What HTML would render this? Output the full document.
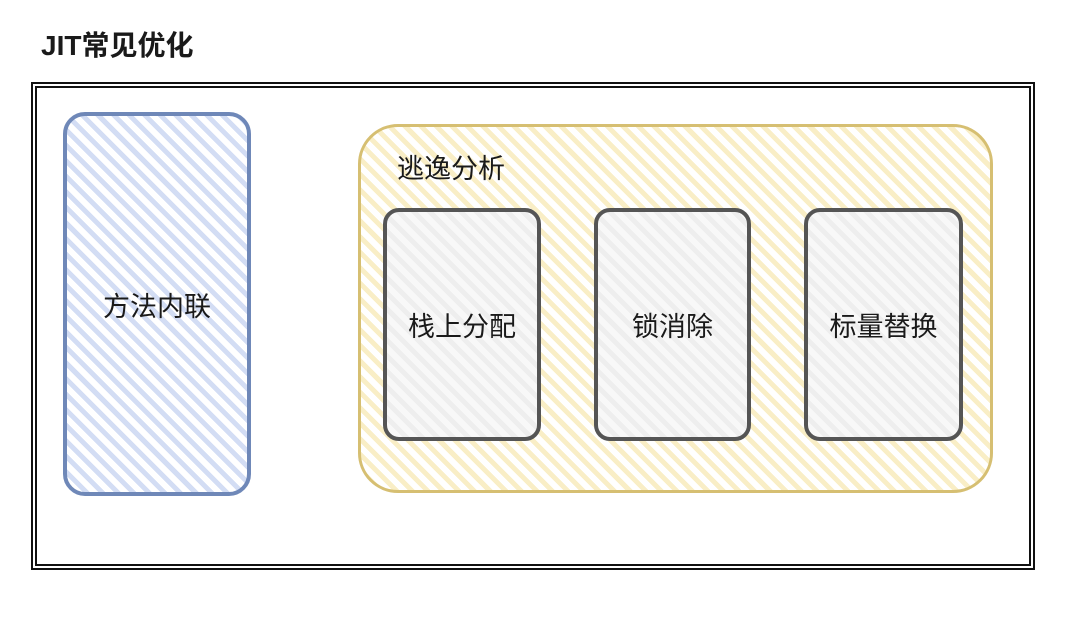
<!DOCTYPE html><html><head><meta charset="utf-8"><style>
body{margin:0;width:1080px;height:634px;background:#fff;position:relative;overflow:hidden;font-family:"Liberation Sans","Noto Sans CJK SC",sans-serif;color:#1a1a1a}
.a{position:absolute;box-sizing:border-box}
.t{display:flex;align-items:center;justify-content:center;font-size:27px}
</style></head><body>
<div class="a" style="left:41px;top:24px;font-size:28px;font-weight:bold;">JIT常见优化</div>
<div class="a" style="left:31px;top:82px;width:1004px;height:488px;border:2px solid #111"></div>
<div class="a" style="left:35px;top:86px;width:996px;height:480px;border:2px solid #111"></div>
<div class="a t" style="left:63px;top:112px;width:188px;height:384px;border:4px solid #6f88b8;border-radius:22px;background:repeating-linear-gradient(45deg,#d3ddf4 0 5px,#fff 5px 11px)">方法内联</div>
<div class="a" style="left:358px;top:124px;width:635px;height:369px;border:3px solid #d6bf72;border-radius:40px;background:repeating-linear-gradient(45deg,#f9eec6 0 5px,#fff 5px 11px)"></div>
<div class="a" style="left:397px;top:147px;font-size:27px">逃逸分析</div>
<div class="a t" style="left:383px;top:208px;width:158px;height:233px;border:4px solid #555;border-radius:16px;background:repeating-linear-gradient(45deg,#eeeeee 0 5px,#f8f8f8 5px 11px)">栈上分配</div>
<div class="a t" style="left:594px;top:208px;width:157px;height:233px;border:4px solid #555;border-radius:16px;background:repeating-linear-gradient(45deg,#eeeeee 0 5px,#f8f8f8 5px 11px)">锁消除</div>
<div class="a t" style="left:804px;top:208px;width:159px;height:233px;border:4px solid #555;border-radius:16px;background:repeating-linear-gradient(45deg,#eeeeee 0 5px,#f8f8f8 5px 11px)">标量替换</div>
</body></html>
